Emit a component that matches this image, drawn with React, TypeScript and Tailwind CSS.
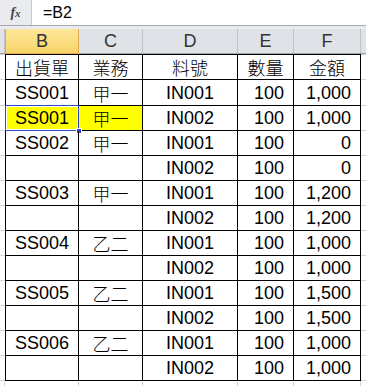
import React from "react";

const rows: string[][] = [
  ["出貨單", "業務", "料號", "數量", "金額"],
  ["SS001", "甲一", "IN001", "100", "1,000"],
  ["SS001", "甲一", "IN002", "100", "1,000"],
  ["SS002", "甲一", "IN001", "100", "0"],
  ["", "", "IN002", "100", "0"],
  ["SS003", "甲一", "IN001", "100", "1,200"],
  ["", "", "IN002", "100", "1,200"],
  ["SS004", "乙二", "IN001", "100", "1,000"],
  ["", "", "IN002", "100", "1,000"],
  ["SS005", "乙二", "IN001", "100", "1,500"],
  ["", "", "IN002", "100", "1,500"],
  ["SS006", "乙二", "IN001", "100", "1,000"],
  ["", "", "IN002", "100", "1,000"],
];

const font = {
  fontFamily: '"Liberation Sans", "Noto Sans CJK TC", sans-serif',
};

const cjk = (s: string) => /[^\x00-\x7f]/.test(s);

export default function App() {
  return (
    <div
      className="w-[366px] h-[386px] overflow-hidden bg-white text-black"
      style={font}
    >
      {/* formula bar */}
      <div className="flex h-[26px] border-b border-[#a7abb0]">
        <div className="w-[32px] bg-[#e9ebee] border-r border-[#c6c9cd] flex items-center justify-center">
          <span
            className="text-[14px] italic font-bold text-[#444]"
            style={{ fontFamily: '"Liberation Serif", serif' }}
          >
            f<span className="text-[11px]">x</span>
          </span>
        </div>
        <div className="flex-1 flex items-center pl-[11px] text-[16px] leading-none">
          =B2
        </div>
      </div>
      <div className="h-[3px] bg-[#e9ebee]" />
      {/* column headers */}
      <div className="flex h-[25px] bg-[#dfe2e6] border-b border-[#9ea2a8] text-[18px] text-[#333] leading-none">
        <div className="w-[5px] border-r border-[#c0c4c9]" />
        <div className="w-[74px] flex items-center justify-center bg-gradient-to-b from-[#fde79a] to-[#f8d468] border-x border-b border-[#e3a94e] -mb-px">
          B
        </div>
        <div className="w-[64px] flex items-center justify-center border-r border-[#c0c4c9]">
          C
        </div>
        <div className="w-[95px] flex items-center justify-center border-r border-[#c0c4c9]">
          D
        </div>
        <div className="w-[56px] flex items-center justify-center border-r border-[#c0c4c9]">
          E
        </div>
        <div className="w-[67px] flex items-center justify-center border-r border-[#c0c4c9]">
          F
        </div>
        <div className="flex-1" />
      </div>
      {/* table */}
      <div className="text-[18px] leading-none">
        {rows.map((r, i) => {
          const h = i < 2 ? "h-[26px]" : "h-[25px]";
          const top = i === 0 ? "border-t" : "";
          const yellow = i === 2;
          const header = i === 0;
          const t = (s: string) =>
            cjk(s) ? (
              <span
                className="font-light"
                style={{ fontFamily: '"Noto Sans CJK TC", sans-serif' }}
              >
                {s}
              </span>
            ) : (
              s
            );
          return (
            <div key={i} className={`flex ${h}`}>
              <div className={`w-[5px] border-b border-[#d4d4d4] ${top} ${i === 0 ? "border-t-[#d4d4d4]" : ""}`} />
              <div
                className={`relative w-[74px] flex items-center justify-center border-x border-b border-black ${top} ${yellow ? "bg-[#ffff00]" : ""}`}
              >
                {t(r[0])}
                {yellow && (
                  <>
                    <div className="absolute -left-px -top-px -right-px -bottom-px border border-[#2c4bc7] shadow-[inset_0_0_0_1px_#ffffff]" />
                    <div className="absolute -right-[4px] -bottom-[4px] w-[6px] h-[6px] bg-[#2c4bc7] border border-white" />
                  </>
                )}
              </div>
              <div
                className={`w-[64px] flex items-center justify-center border-r border-b border-black ${top} ${yellow ? "bg-[#ffff00]" : ""}`}
              >
                {t(r[1])}
              </div>
              <div className={`w-[95px] flex items-center justify-center border-r border-b border-black ${top}`}>
                {t(r[2])}
              </div>
              <div
                className={`w-[56px] flex items-center ${header ? "justify-center" : "justify-end pr-[9px]"} border-r border-b border-black ${top}`}
              >
                {t(r[3])}
              </div>
              <div
                className={`w-[67px] flex items-center ${header ? "justify-center" : "justify-end pr-[9px]"} border-r border-b border-black ${top}`}
              >
                {t(r[4])}
              </div>
              <div className={`flex-1 border-b border-[#d4d4d4] ${top} ${i === 0 ? "border-t-[#d4d4d4]" : ""}`} />
            </div>
          );
        })}
        <div className="flex h-[10px]">
          <div className="w-[5px] border-r border-[#d4d4d4]" />
          <div className="w-[74px] border-r border-[#d4d4d4]" />
          <div className="w-[64px] border-r border-[#d4d4d4]" />
          <div className="w-[95px] border-r border-[#d4d4d4]" />
          <div className="w-[56px] border-r border-[#d4d4d4]" />
          <div className="w-[67px] border-r border-[#d4d4d4]" />
          <div className="flex-1" />
        </div>
      </div>
    </div>
  );
}
